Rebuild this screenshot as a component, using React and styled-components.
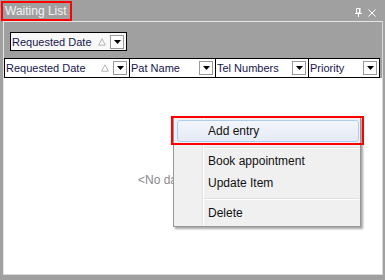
import React from "react";
import styled, { createGlobalStyle } from "styled-components";

const GlobalStyle = createGlobalStyle`
  html, body {
    margin: 0;
    padding: 0;
    background: #a0a0a0;
  }
  * {
    box-sizing: border-box;
  }
`;

const Window = styled.div`
  width: 385px;
  height: 280px;
  background: #a0a0a0;
  display: flex;
  flex-direction: column;
  font-family: "Liberation Sans", Arial, sans-serif;
  overflow: hidden;
`;

const TitleBar = styled.div`
  height: 21px;
  display: flex;
  align-items: flex-start;
  justify-content: space-between;
  padding: 1px 0 0 1px;
`;

const Title = styled.span`
  height: 20px;
  border: 2px solid #ff0000;
  padding: 0 3px 0 2px;
  display: flex;
  align-items: center;
  color: #f2f3f6;
  font-size: 12px;
`;

const TitleButtons = styled.div`
  display: flex;
  align-items: center;
  gap: 6px;
  padding: 7px 9px 0 0;
`;

const Content = styled.div`
  flex: 1;
  margin: 0 2px 5px 3px;
  border-top: 1px solid #e4e4e4;
  border-left: 1px solid #e4e4e4;
  border-right: 1px solid #d8d8d8;
  border-bottom: 1px solid #d8d8d8;
  display: flex;
  flex-direction: column;
  min-height: 0;
`;

const GroupPanel = styled.div`
  height: 36px;
  background: #a0a0a0;
  padding: 10px 0 0 6px;
`;

const Chip = styled.div`
  width: 117px;
  height: 19px;
  border: 1px solid #000;
  background: #f8f8f8;
  display: flex;
  align-items: center;
  padding: 0 2px 0 1px;
`;

const Label = styled.span`
  flex: 1;
  font-size: 11px;
  color: #16164e;
  white-space: nowrap;
  overflow: hidden;
`;

const Header = styled.div`
  display: grid;
  grid-template-columns: 125px 86px 93px 71px;
  margin-right: 2px;
  border: 1px solid #000;
  border-right: none;
  background: #fff;
  height: 20px;
`;

const HeaderCell = styled.div`
  border-right: 1px solid #000;
  display: flex;
  align-items: center;
  padding: 0 2px 0 1px;
`;

const SortMark = styled.svg`
  width: 8px;
  height: 8px;
  margin-right: 4px;
`;

const DropButton = styled.div`
  width: 14px;
  height: 14px;
  border: 1px solid #9a9a9a;
  background: #fff;
  display: flex;
  align-items: center;
  justify-content: center;
  flex: none;
`;

const Body = styled.div`
  flex: 1;
  background: #fff;
  position: relative;
  display: flex;
  align-items: center;
  justify-content: center;
`;

const NoData = styled.span`
  font-size: 12px;
  color: #8a8a8a;
  margin-top: 8px;
`;

const Menu = styled.div`
  position: absolute;
  left: 169px;
  top: 39px;
  width: 188px;
  height: 110px;
  border: 1px solid #979797;
  box-shadow: 2px 2px 2px rgba(0, 0, 0, 0.35);
  padding: 2px 1px 1px 3px;
  background: linear-gradient(
    to right,
    #f0f0f0 0 28px,
    #e2e3e3 28px 29px,
    #ffffff 29px 30px,
    #f0f0f0 30px
  );
`;

const Item = styled.div`
  height: 22px;
  display: flex;
  align-items: center;
  padding-left: 30px;
  font-size: 12px;
  color: #111;
  border: 1px solid ${(p) => (p.active ? "#abcbf0" : "transparent")};
  border-radius: 3px;
  background: ${(p) =>
    p.active ? "linear-gradient(#f3f6fb, #e4ebf6)" : "transparent"};
`;

const Separator = styled.div`
  height: 8px;
  margin-left: 27px;
  padding-top: ${(p) => p.offset}px;

  &::before {
    content: "";
    display: block;
    height: 1px;
    background: #e0e0e0;
    border-bottom: 1px solid #fff;
    box-sizing: content-box;
  }
`;

const Highlight = styled.div`
  position: absolute;
  left: -3px;
  top: -2px;
  width: 193px;
  height: 29px;
  border: 2px solid #ff0000;
  pointer-events: none;
`;

const Arrow = () => (
  <svg width="7" height="4" viewBox="0 0 7 4">
    <path d="M0 0h7L3.5 4z" fill="#000" />
  </svg>
);

const Sort = () => (
  <SortMark viewBox="0 0 8 8">
    <path d="M4 0.8L7.4 7.2H0.6z" fill="none" stroke="#b4b4b4" strokeWidth="1" />
  </SortMark>
);

const columns = [
  { name: "Requested Date", sorted: true },
  { name: "Pat Name" },
  { name: "Tel Numbers" },
  { name: "Priority" },
];

export default function App() {
  return (
    <>
      <GlobalStyle />
      <Window>
        <TitleBar>
          <Title>Waiting List</Title>
          <TitleButtons>
            <svg width="7" height="9" viewBox="0 0 7 9">
              <path
                d="M1.5 0.5h3v4.5h-3z"
                fill="none"
                stroke="#fff"
                strokeWidth="1"
              />
              <path d="M4.5 0v5h1V0z" fill="#fff" />
              <path d="M0 5h7v1H0zM3 6h1v3H3z" fill="#fff" />
            </svg>
            <svg width="8" height="8" viewBox="0 0 8 8">
              <path d="M0.5 0.5l7 7M7.5 0.5l-7 7" stroke="#fff" strokeWidth="1" />
            </svg>
          </TitleButtons>
        </TitleBar>
        <Content>
          <GroupPanel>
            <Chip>
              <Label>Requested Date</Label>
              <Sort />
              <DropButton>
                <Arrow />
              </DropButton>
            </Chip>
          </GroupPanel>
          <Header>
            {columns.map((c) => (
              <HeaderCell key={c.name}>
                <Label>{c.name}</Label>
                {c.sorted && <Sort />}
                <DropButton>
                  <Arrow />
                </DropButton>
              </HeaderCell>
            ))}
          </Header>
          <Body>
            <NoData>&lt;No data to display&gt;</NoData>
            <Menu>
              <Item active>Add entry</Item>
              <Separator offset={5} />
              <Item>Book appointment</Item>
              <Item>Update Item</Item>
              <Separator offset={4} />
              <Item>Delete</Item>
              <Highlight />
            </Menu>
          </Body>
        </Content>
      </Window>
    </>
  );
}
